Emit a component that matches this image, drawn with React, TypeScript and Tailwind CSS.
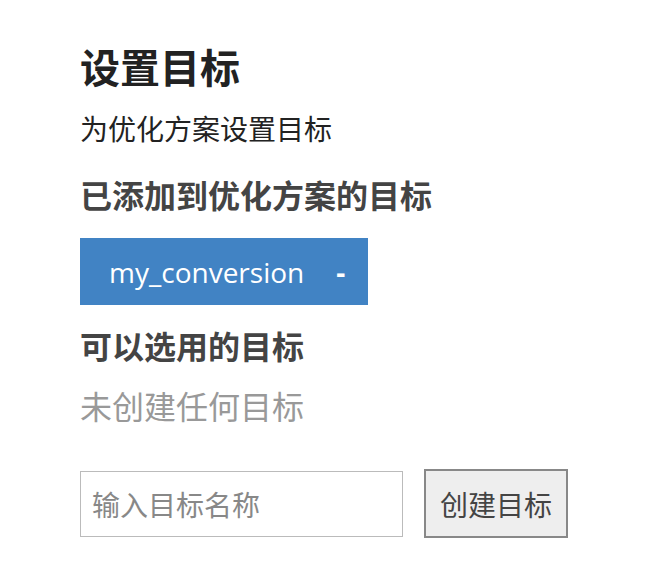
const cjk = '"Noto Sans CJK SC", sans-serif';
const latin = '"Open Sans", "Noto Sans CJK SC", sans-serif';

export default function App() {
  return (
    <div className="min-h-[584px] bg-white pl-[80px] pt-[42px]" style={{ fontFamily: cjk }}>
      <h1 className="text-[40px] font-bold leading-[48px] text-[#222]">设置目标</h1>
      <p className="mt-[20px] text-[28px] leading-[36px] text-[#222]">为优化方案设置目标</p>
      <h2 className="mt-[28px] text-[32px] font-bold leading-[40px] text-[#444]">已添加到优化方案的目标</h2>

      <div
        className="mt-[24px] flex h-[67px] w-[288px] items-center bg-[#4183c4] pl-[29px] text-[28px] text-white"
        style={{ fontFamily: latin }}
      >
        <span>my_conversion</span>
        <span className="ml-[32px] font-bold">-</span>
      </div>

      <h2 className="mt-[20px] text-[32px] font-bold leading-[40px] text-[#444]">可以选用的目标</h2>
      <p className="mt-[20px] text-[32px] leading-[40px] text-[#999]">未创建任何目标</p>

      <div className="mt-[44px] flex items-center gap-[21px]">
        <input
          className="h-[66px] w-[323px] border border-[#bbb] px-[11px] text-[28px] text-[#333] outline-none placeholder:text-[#888]"
          placeholder="输入目标名称"
          style={{ fontFamily: cjk }}
        />
        <button className="h-[69px] w-[144px] border-2 border-[#888] bg-[#eee] text-[28px] text-[#444]">
          创建目标
        </button>
      </div>
    </div>
  );
}
